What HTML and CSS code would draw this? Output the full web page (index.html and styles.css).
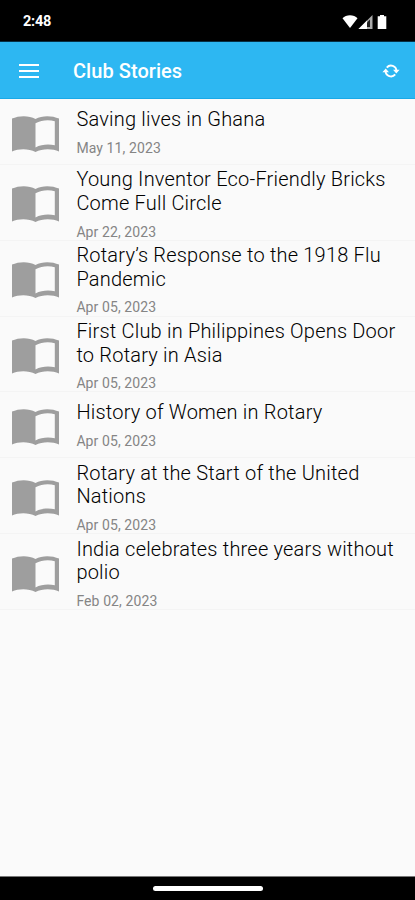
FILE: index.html
```html
<!DOCTYPE html>
<html lang="en">
<head>
<meta charset="utf-8">
<title>Club Stories</title>
<link rel="stylesheet" href="styles.css">
</head>
<body>
<svg width="0" height="0" class="defs">
  <symbol id="book" viewBox="0 0 47 36">
    <path fill="#9e9e9e" fill-rule="evenodd" d="M0 2.6C7 -.6 17-.8 23.5 3 30-.8 40-.6 47 2.6V35.4C40 32.2 30 32.4 23.5 36 17 32.4 7 32.2 0 35.4ZM23.5 7.3V31.4C29.500 28.200 37 27.800 42.800 29.300V5.300C37 3.600 29.500 4 23.500 7.300Z"/>
  </symbol>
</svg>
<div class="screen">
  <div class="status">
    <span class="time">2:48</span>
    <svg class="status-icons" width="46" height="16" viewBox="0 0 46 16">
      <path fill="#fff" d="M0.500 4.300C4 .2 12 .2 15.500 4.300L8 14Z"/>
      <path fill="#aaa" d="M30.500 1V15H16.500Z"/>
      <path fill="#fff" d="M25 6.500V15H16.500Z"/>
      <path fill="#222" d="M25 8.500L28 5.500V13H25Z"/>
      <path fill="#fff" d="M38 1h4v1.300h2.300V15H35.700V2.300H38Z"/>
    </svg>
  </div>
  <header class="bar">
    <div class="menu"><i></i><i></i><i></i></div>
    <h1>Club Stories</h1>
    <svg class="sync" width="18" height="16" viewBox="0 0 18 16" fill="none" stroke="#fff" stroke-width="1.900">
      <path d="M4.800 4.600A5.400 5.400 0 0 1 14.400 8"/>
      <path d="M13.200 11.400A5.400 5.400 0 0 1 3.600 8"/>
      <path fill="#fff" stroke="none" d="M.4 9.200h6.600L3.700 5.400ZM11 6.800h6.600L14.300 10.600Z"/>
    </svg>
  </header>
  <main class="list">
    <article class="row"><svg class="book"><use href="#book"/></svg><div class="text"><h2>Saving lives in Ghana</h2><p>May 11, 2023</p></div></article>
    <article class="row tall"><svg class="book"><use href="#book"/></svg><div class="text"><h2>Young Inventor Eco-Friendly Bricks<br>Come Full Circle</h2><p>Apr 22, 2023</p></div></article>
    <article class="row tall"><svg class="book"><use href="#book"/></svg><div class="text"><h2>Rotary’s Response to the 1918 Flu<br>Pandemic</h2><p>Apr 05, 2023</p></div></article>
    <article class="row tall"><svg class="book"><use href="#book"/></svg><div class="text"><h2>First Club in Philippines Opens Door<br>to Rotary in Asia</h2><p>Apr 05, 2023</p></div></article>
    <article class="row"><svg class="book"><use href="#book"/></svg><div class="text"><h2>History of Women in Rotary</h2><p>Apr 05, 2023</p></div></article>
    <article class="row tall"><svg class="book"><use href="#book"/></svg><div class="text"><h2>Rotary at the Start of the United<br>Nations</h2><p>Apr 05, 2023</p></div></article>
    <article class="row tall"><svg class="book"><use href="#book"/></svg><div class="text"><h2>India celebrates three years without<br>polio</h2><p>Feb 02, 2023</p></div></article>
  </main>
  <footer class="nav"><div class="handle"></div></footer>
</div>
</body>
</html>
```
FILE: styles.css
```css
* { box-sizing: border-box; margin: 0; padding: 0; }
body { font-family: Roboto, sans-serif; background: #fafafa; }
.defs { display: block; }
.screen { display: flex; flex-direction: column; height: 900px; width: 415px; overflow: hidden; }
.status { height: 42px; flex: none; background: #000; display: flex; justify-content: space-between; align-items: center; padding: 0 27px 0 23px; border-bottom: 1px solid #063046; }
.time { color: #fff; font-size: 14.5px; font-weight: 700; line-height: 18px; padding-top: 2px; letter-spacing: -0.2px; }
.status-icons { display: block; margin-top: 2px; }
.bar { height: 57px; flex: none; background: #2db7f2; border-bottom: 1px solid #19a9e8; display: flex; align-items: center; padding: 0 15px 0 19px; }
.menu { width: 20px; display: flex; flex-direction: column; gap: 4px; padding-top: 1px; }
.menu i { height: 2px; background: #fff; }
.bar h1 { flex: 1; margin-left: 34px; padding-top: 2px; color: #fff; font-size: 20px; font-weight: 500; line-height: 24px; letter-spacing: 0.05px; }
.sync { display: block; margin-top: 1px; }
.list { flex: 1; }
.row { height: 65.8px; display: flex; padding: 9px 0 0 12px; border-bottom: 1px solid #f4f4f4; }
.tall { height: 75.9px; padding-top: 3.6px; }
.book { width: 47px; height: 36px; flex: none; margin-top: 8px; }
.tall .book { margin-top: 17.8px; }
.text { margin-left: 17.4px; white-space: nowrap; }
.text h2 { font-size: 20px; font-weight: 300; line-height: 23.6px; color: #000; letter-spacing: 0.2px; }
.text p { margin-top: 7px; font-size: 14px; line-height: 18px; color: #858585; letter-spacing: 0.1px; }
.nav { height: 24px; flex: none; background: #000; border-top: 1px solid #777; display: flex; justify-content: center; padding-top: 9px; }
.handle { width: 110px; height: 5px; border-radius: 3px; background: #fff; }
```
